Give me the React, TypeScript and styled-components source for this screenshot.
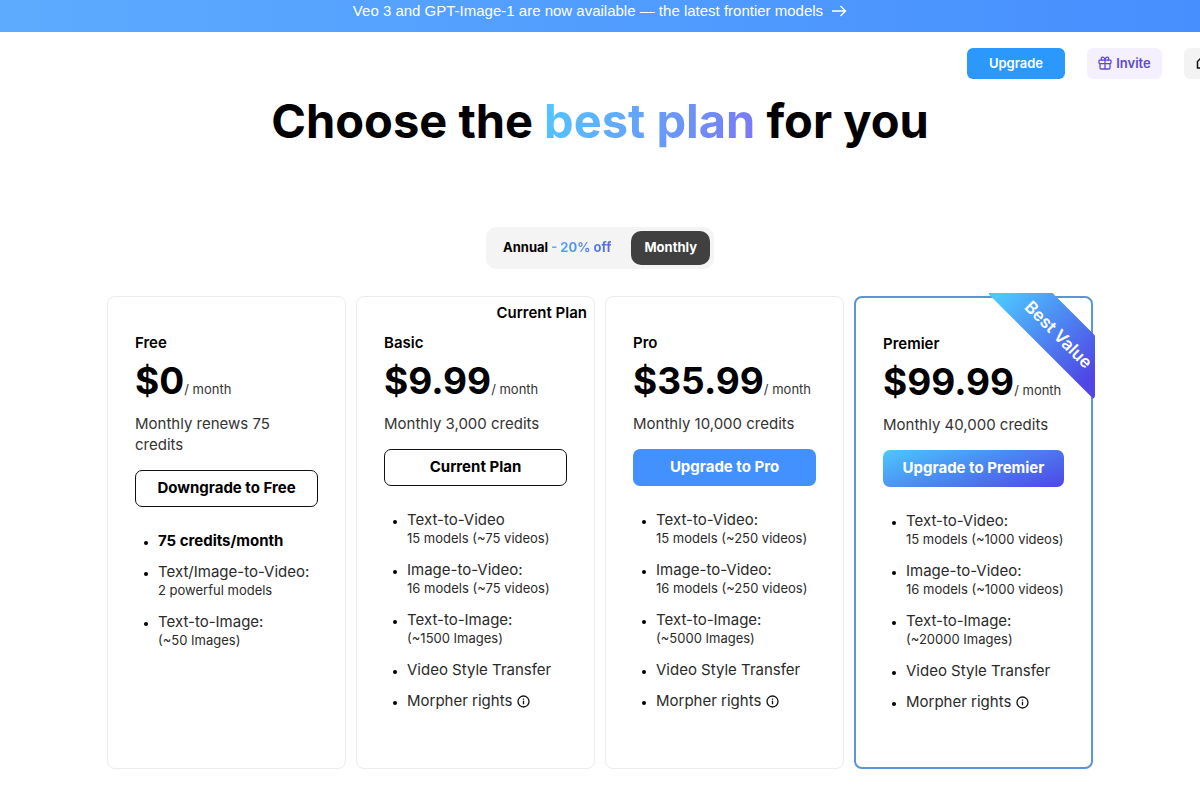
import React from "react";
import styled, { createGlobalStyle, css } from "styled-components";

const GlobalStyle = createGlobalStyle`
  *, *::before, *::after { box-sizing: border-box; }
  body {
    margin: 0;
    background: #fff;
    color: #000;
    font-family: Inter, "Open Sans", sans-serif;
    overflow-x: hidden;
  }
  button { font-family: inherit; cursor: pointer; }
`;

const Banner = styled.a`
  display: flex;
  align-items: center;
  justify-content: center;
  gap: 8px;
  height: 32px;
  padding-bottom: 10px;
  background: linear-gradient(90deg, #5cabff, #468ffe);
  color: #fff;
  font: 15px/20px "Liberation Sans", Arial, sans-serif;
  text-decoration: none;
`;

const TopBar = styled.header`
  display: flex;
  justify-content: flex-end;
  gap: 22px;
  padding-top: 16px;
  overflow: hidden;
`;

const TopButton = styled.button<{ $tone: "solid" | "soft" | "grey" }>`
  display: flex;
  flex-shrink: 0;
  align-items: center;
  justify-content: center;
  gap: 4px;
  height: 31px;
  padding: 0 10px 2px;
  border: 0;
  border-radius: 6px;
  font-size: 13px;
  font-weight: 600;
  ${({ $tone }) =>
    $tone === "solid"
      ? css`width: 98px; background: #2b98fd; color: #fff;`
      : $tone === "soft"
      ? css`width: 75px; background: #f4f0fe; color: #5f4bd0;`
      : css`width: 40px; margin-right: -24px; background: #f3f3f3; color: #111;`}
`;

const Title = styled.h1`
  margin: 12px 0 0;
  font-size: 47px;
  line-height: 60px;
  font-weight: 700;
  text-align: center;
`;

const gradientText = css`
  background-clip: text;
  -webkit-background-clip: text;
  color: transparent;
`;

const TitleAccent = styled.span`
  ${gradientText}
  background-image: linear-gradient(110deg, #50c8ff, #7b77f5);
`;

const Toggle = styled.div`
  display: flex;
  justify-content: space-between;
  width: 228px;
  margin: 76px auto 0;
  padding: 4px;
  border-radius: 10px;
  background: #f4f4f4;
`;

const ToggleOption = styled.button<{ $active?: boolean }>`
  height: 34px;
  padding: 0 13px 2px;
  border: 0;
  border-radius: 10px;
  background: ${({ $active }) => ($active ? "#404040" : "transparent")};
  color: ${({ $active }) => ($active ? "#fff" : "#000")};
  font-size: 13px;
  font-weight: 700;
  white-space: nowrap;
`;

const Discount = styled.span`
  ${gradientText}
  background-image: linear-gradient(90deg, #53aef8, #5767e8);
`;

const Plans = styled.main`
  display: grid;
  grid-template-columns: repeat(4, minmax(0, 1fr));
  gap: 10px;
  max-width: 986px;
  margin: 27px auto 30px;
`;

const Card = styled.section<{ $featured?: boolean }>`
  position: relative;
  padding: 36px 27px 56px;
  border: ${({ $featured }) => ($featured ? "2px solid #5a95d8" : "1px solid #ececec")};
  border-radius: 8px;
`;

const CurrentTag = styled.span`
  position: absolute;
  top: 6px;
  right: 7px;
  font-size: 15px;
  line-height: 20px;
  font-weight: 600;
`;

const PlanName = styled.h2`
  margin: 0;
  font-size: 15px;
  line-height: 20px;
  font-weight: 600;
`;

const Price = styled.p`
  margin: 4px 0 0;
  font-size: 37px;
  line-height: 48px;
  font-weight: 700;
  white-space: nowrap;
`;

const Period = styled.span`
  color: #333;
  font-size: 13px;
  line-height: 20px;
  font-weight: 400;
`;

const Credits = styled.p`
  margin: 8px 0 0;
  color: #333;
  font-size: 15px;
  line-height: 21px;
`;

const PlanButton = styled.button<{ $kind: "outline" | "primary" | "gradient" }>`
  width: 100%;
  height: 37px;
  margin-top: 15px;
  padding: 0 0 2px;
  border-radius: 7px;
  font-size: 15px;
  font-weight: 700;
  white-space: nowrap;
  ${({ $kind }) =>
    $kind === "outline"
      ? css`border: 1px solid #111; background: #fff; color: #000;`
      : $kind === "primary"
      ? css`border: 0; background: #4391ff; color: #fff;`
      : css`border: 0; background: linear-gradient(160deg, #4cc8fb, #4b86f2 50%, #4f46e5); color: #fff;`}
`;

const Features = styled.ul`
  display: flex;
  flex-direction: column;
  gap: 12px;
  margin: 24px -8px 0 0;
  padding: 0 0 0 23px;
`;

const Feature = styled.li<{ $bold?: boolean }>`
  font-size: 15px;
  line-height: 19px;
  font-weight: ${({ $bold }) => ($bold ? 700 : 400)};
  color: ${({ $bold }) => ($bold ? "#000" : "#2a2a2a")};
  white-space: nowrap;
  &::marker { font-size: 11px; color: #000; }
  svg { vertical-align: -2px; }
`;

const Detail = styled.div`
  font-size: 13px;
  line-height: 19px;
`;

const RibbonClip = styled.div`
  position: absolute;
  top: -5px;
  right: -4px;
  width: 106px;
  height: 106px;
  overflow: hidden;
  border-bottom-right-radius: 4px;
`;

const Ribbon = styled.span`
  position: absolute;
  top: 17px;
  left: -17px;
  width: 176px;
  height: 46px;
  background: linear-gradient(90deg, #4cc8ff 10%, #4f46e5 80%);
  color: #fff;
  font: 600 17px/50px Inter, sans-serif;
  text-align: center;
  transform: rotate(45deg);
`;

const ArrowIcon = () => (
  <svg width="16" height="12" viewBox="0 0 16 12" fill="none" stroke="currentColor" strokeWidth="1.3" aria-hidden="true">
    <path d="M1 6h13.500M9.500 1 14.500 6 9.500 11" />
  </svg>
);

const GiftIcon = () => (
  <svg width="14" height="14" viewBox="0 0 14 14" fill="none" stroke="currentColor" strokeWidth="1.3" strokeLinejoin="round" aria-hidden="true">
    <rect x="1" y="4.2" width="12" height="3.4" rx="0.8" />
    <path d="M2 7.6v4.2c0 .8.4 1.2 1.2 1.2h7.6c.8 0 1.2-.4 1.2-1.2V7.6M7 4.2V13M7 4.2C6.7 2.2 5.8 1.2 4.7 1.2a1.5 1.5 0 0 0 0 3M7 4.2c.3-2 1.2-3 2.3-3a1.5 1.5 0 0 1 0 3" />
  </svg>
);

const BookIcon = () => (
  <svg width="16" height="14" viewBox="0 0 16 14" fill="none" stroke="currentColor" strokeWidth="1.5" aria-hidden="true">
    <path d="M5 2h9v10H1.500V5.500z" />
  </svg>
);

const InfoIcon = () => (
  <svg width="13" height="13" viewBox="0 0 13 13" fill="none" stroke="#111" strokeWidth="1.3" role="img" aria-label="More information">
    <circle cx="6.5" cy="6.5" r="5.5" />
    <path d="M6.5 5.8v3.5M6.5 3.5v1.3" />
  </svg>
);

type Item = { label: string; detail?: string; bold?: boolean; info?: boolean };
type Plan = {
  name: string;
  price: string;
  credits: string;
  action: string;
  kind: "outline" | "primary" | "gradient";
  current?: boolean;
  featured?: boolean;
  items: Item[];
};

const paidItems = (first: string, videos: string, images: string): Item[] => [
  { label: first, detail: `15 models (~${videos} videos)` },
  { label: "Image-to-Video:", detail: `16 models (~${videos} videos)` },
  { label: "Text-to-Image:", detail: `(~${images} Images)` },
  { label: "Video Style Transfer" },
  { label: "Morpher rights", info: true },
];

const plans: Plan[] = [
  {
    name: "Free",
    price: "$0",
    credits: "Monthly renews 75 credits",
    action: "Downgrade to Free",
    kind: "outline",
    items: [
      { label: "75 credits/month", bold: true },
      { label: "Text/Image-to-Video:", detail: "2 powerful models" },
      { label: "Text-to-Image:", detail: "(~50 Images)" },
    ],
  },
  {
    name: "Basic",
    price: "$9.99",
    credits: "Monthly 3,000 credits",
    action: "Current Plan",
    kind: "outline",
    current: true,
    items: paidItems("Text-to-Video", "75", "1500"),
  },
  {
    name: "Pro",
    price: "$35.99",
    credits: "Monthly 10,000 credits",
    action: "Upgrade to Pro",
    kind: "primary",
    items: paidItems("Text-to-Video:", "250", "5000"),
  },
  {
    name: "Premier",
    price: "$99.99",
    credits: "Monthly 40,000 credits",
    action: "Upgrade to Premier",
    kind: "gradient",
    featured: true,
    items: paidItems("Text-to-Video:", "1000", "20000"),
  },
];

export default function App() {
  return (
    <>
      <GlobalStyle />
      <Banner href="#models">
        Veo 3 and GPT-Image-1 are now available — the latest frontier models
        <ArrowIcon />
      </Banner>
      <TopBar>
        <TopButton $tone="solid">Upgrade</TopButton>
        <TopButton $tone="soft"><GiftIcon />Invite</TopButton>
        <TopButton $tone="grey" aria-label="Guide"><BookIcon /></TopButton>
      </TopBar>
      <Title>
        Choose the <TitleAccent>best plan</TitleAccent> for you
      </Title>
      <Toggle>
        <ToggleOption>Annual <Discount>- 20% off</Discount></ToggleOption>
        <ToggleOption $active>Monthly</ToggleOption>
      </Toggle>
      <Plans>
        {plans.map((plan) => (
          <Card key={plan.name} $featured={plan.featured}>
            {plan.current && <CurrentTag>Current Plan</CurrentTag>}
            {plan.featured && <RibbonClip><Ribbon>Best Value</Ribbon></RibbonClip>}
            <PlanName>{plan.name}</PlanName>
            <Price>{plan.price}<Period>/ month</Period></Price>
            <Credits>{plan.credits}</Credits>
            <PlanButton $kind={plan.kind}>{plan.action}</PlanButton>
            <Features>
              {plan.items.map((item) => (
                <Feature key={item.label} $bold={item.bold}>
                  {item.label}
                  {item.info && <> <InfoIcon /></>}
                  {item.detail && <Detail>{item.detail}</Detail>}
                </Feature>
              ))}
            </Features>
          </Card>
        ))}
      </Plans>
    </>
  );
}
